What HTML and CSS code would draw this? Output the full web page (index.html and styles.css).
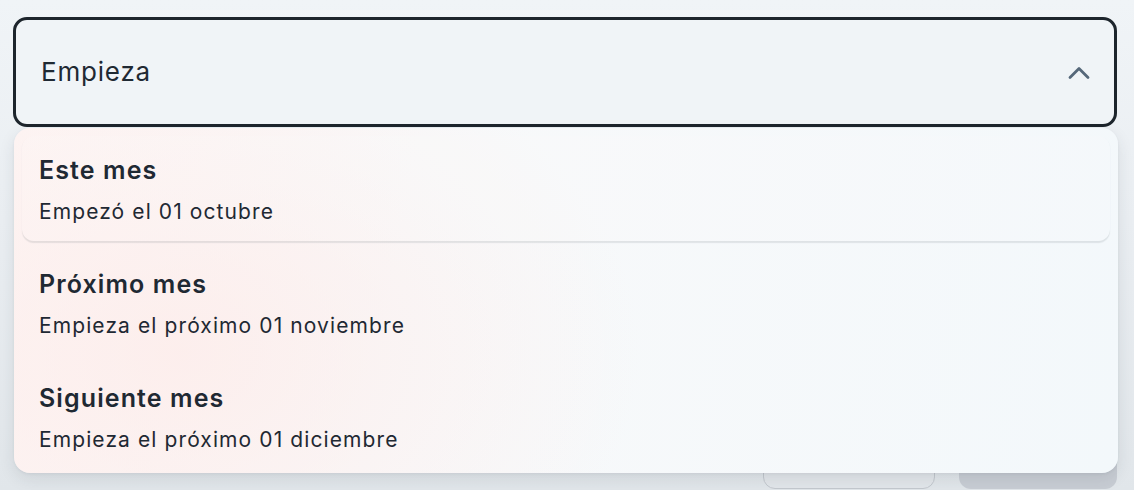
FILE: index.html
```html
<!DOCTYPE html>
<html lang="es">
<head>
<meta charset="utf-8">
<title>Empieza</title>
<link rel="stylesheet" href="styles.css">
</head>
<body>
<div class="page">
  <div class="field">
    <button class="select" type="button">
      <span class="select-label">Empieza</span>
      <svg class="chevron" width="22" height="14" viewBox="0 0 22 14" aria-hidden="true">
        <path d="M2 11.5 L11 2.5 L20 11.5" fill="none" stroke="#56687a" stroke-width="2.8" stroke-linecap="round" stroke-linejoin="round"/>
      </svg>
    </button>
    <ul class="menu">
      <li class="option option-active">
        <span class="option-title">Este mes</span>
        <span class="option-sub">Empezó el 01 octubre</span>
      </li>
      <li class="option">
        <span class="option-title">Próximo mes</span>
        <span class="option-sub">Empieza el próximo 01 noviembre</span>
      </li>
      <li class="option">
        <span class="option-title">Siguiente mes</span>
        <span class="option-sub">Empieza el próximo 01 diciembre</span>
      </li>
    </ul>
  </div>
  <div class="actions">
    <div class="btn btn-outline"></div>
    <div class="btn btn-filled"></div>
  </div>
</div>
</body>
</html>
```

FILE: styles.css
```css
* { box-sizing: border-box; }
html, body { margin: 0; padding: 0; }
body {
  font-family: Inter, "Noto Sans", "Liberation Sans", sans-serif;
  color: #1f2933;
  background: linear-gradient(180deg, #f0f4f7 0%, #eaeef2 45%, #e1e6ea 100%);
  height: 490px;
  overflow: hidden;
}
.page {
  height: 490px;
  display: flex;
  flex-direction: column;
  padding: 17px 17px 1px 13px;
}
.field { position: relative; }
.select {
  width: 1104px;
  height: 110px;
  display: flex;
  align-items: center;
  justify-content: space-between;
  padding: 0 24px 0 25px;
  background: #f0f4f7;
  border: 3px solid #1d252c;
  border-radius: 14px;
  font: inherit;
  color: #1f2933;
  text-align: left;
}
.select-label {
  font-size: 26px;
  line-height: 32px;
  letter-spacing: 0.8px;
}
.chevron { display: block; margin-top: 1px; }
.menu {
  position: absolute;
  top: 111px;
  left: 1px;
  width: 1104px;
  height: 345px;
  margin: 0;
  padding: 8px 8px 4px;
  list-style: none;
  border-radius: 16px;
  background:
    radial-gradient(ellipse 460px 340px at 15% 65%, rgba(253, 236, 234, 0.8), rgba(253, 236, 234, 0) 100%),
    linear-gradient(100deg, #fdf5f4 0%, #f8f9fa 35%, #f3f8fb 100%);
  box-shadow: 0 6px 16px rgba(40, 50, 60, 0.10), 0 1px 3px rgba(40, 50, 60, 0.06);
  display: flex;
  flex-direction: column;
  gap: 9px;
}
.option {
  height: 105px;
  display: flex;
  flex-direction: column;
  padding: 19px 16px 0 17px;
  border-radius: 12px;
}
.option-active {
  background: rgba(255, 255, 255, 0.12);
  box-shadow: 0 1.5px 1px rgba(60, 70, 80, 0.12);
}
.option-title {
  font-size: 25px;
  line-height: 31px;
  font-weight: 600;
  letter-spacing: 1.1px;
  color: #1f2933;
}
.option-sub {
  margin-top: 12px;
  font-size: 21px;
  line-height: 28px;
  letter-spacing: 1.1px;
  color: #1f2933;
}
.actions {
  margin-top: auto;
  display: flex;
  justify-content: flex-end;
  gap: 24px;
}
.btn {
  height: 52px;
  border-radius: 12px;
}
.btn-outline {
  width: 172px;
  border: 1px solid #c3c8ce;
  background: #e2e6ea;
}
.btn-filled {
  width: 158px;
  background: #c8cdd4;
  margin-bottom: -3px;
}
```
